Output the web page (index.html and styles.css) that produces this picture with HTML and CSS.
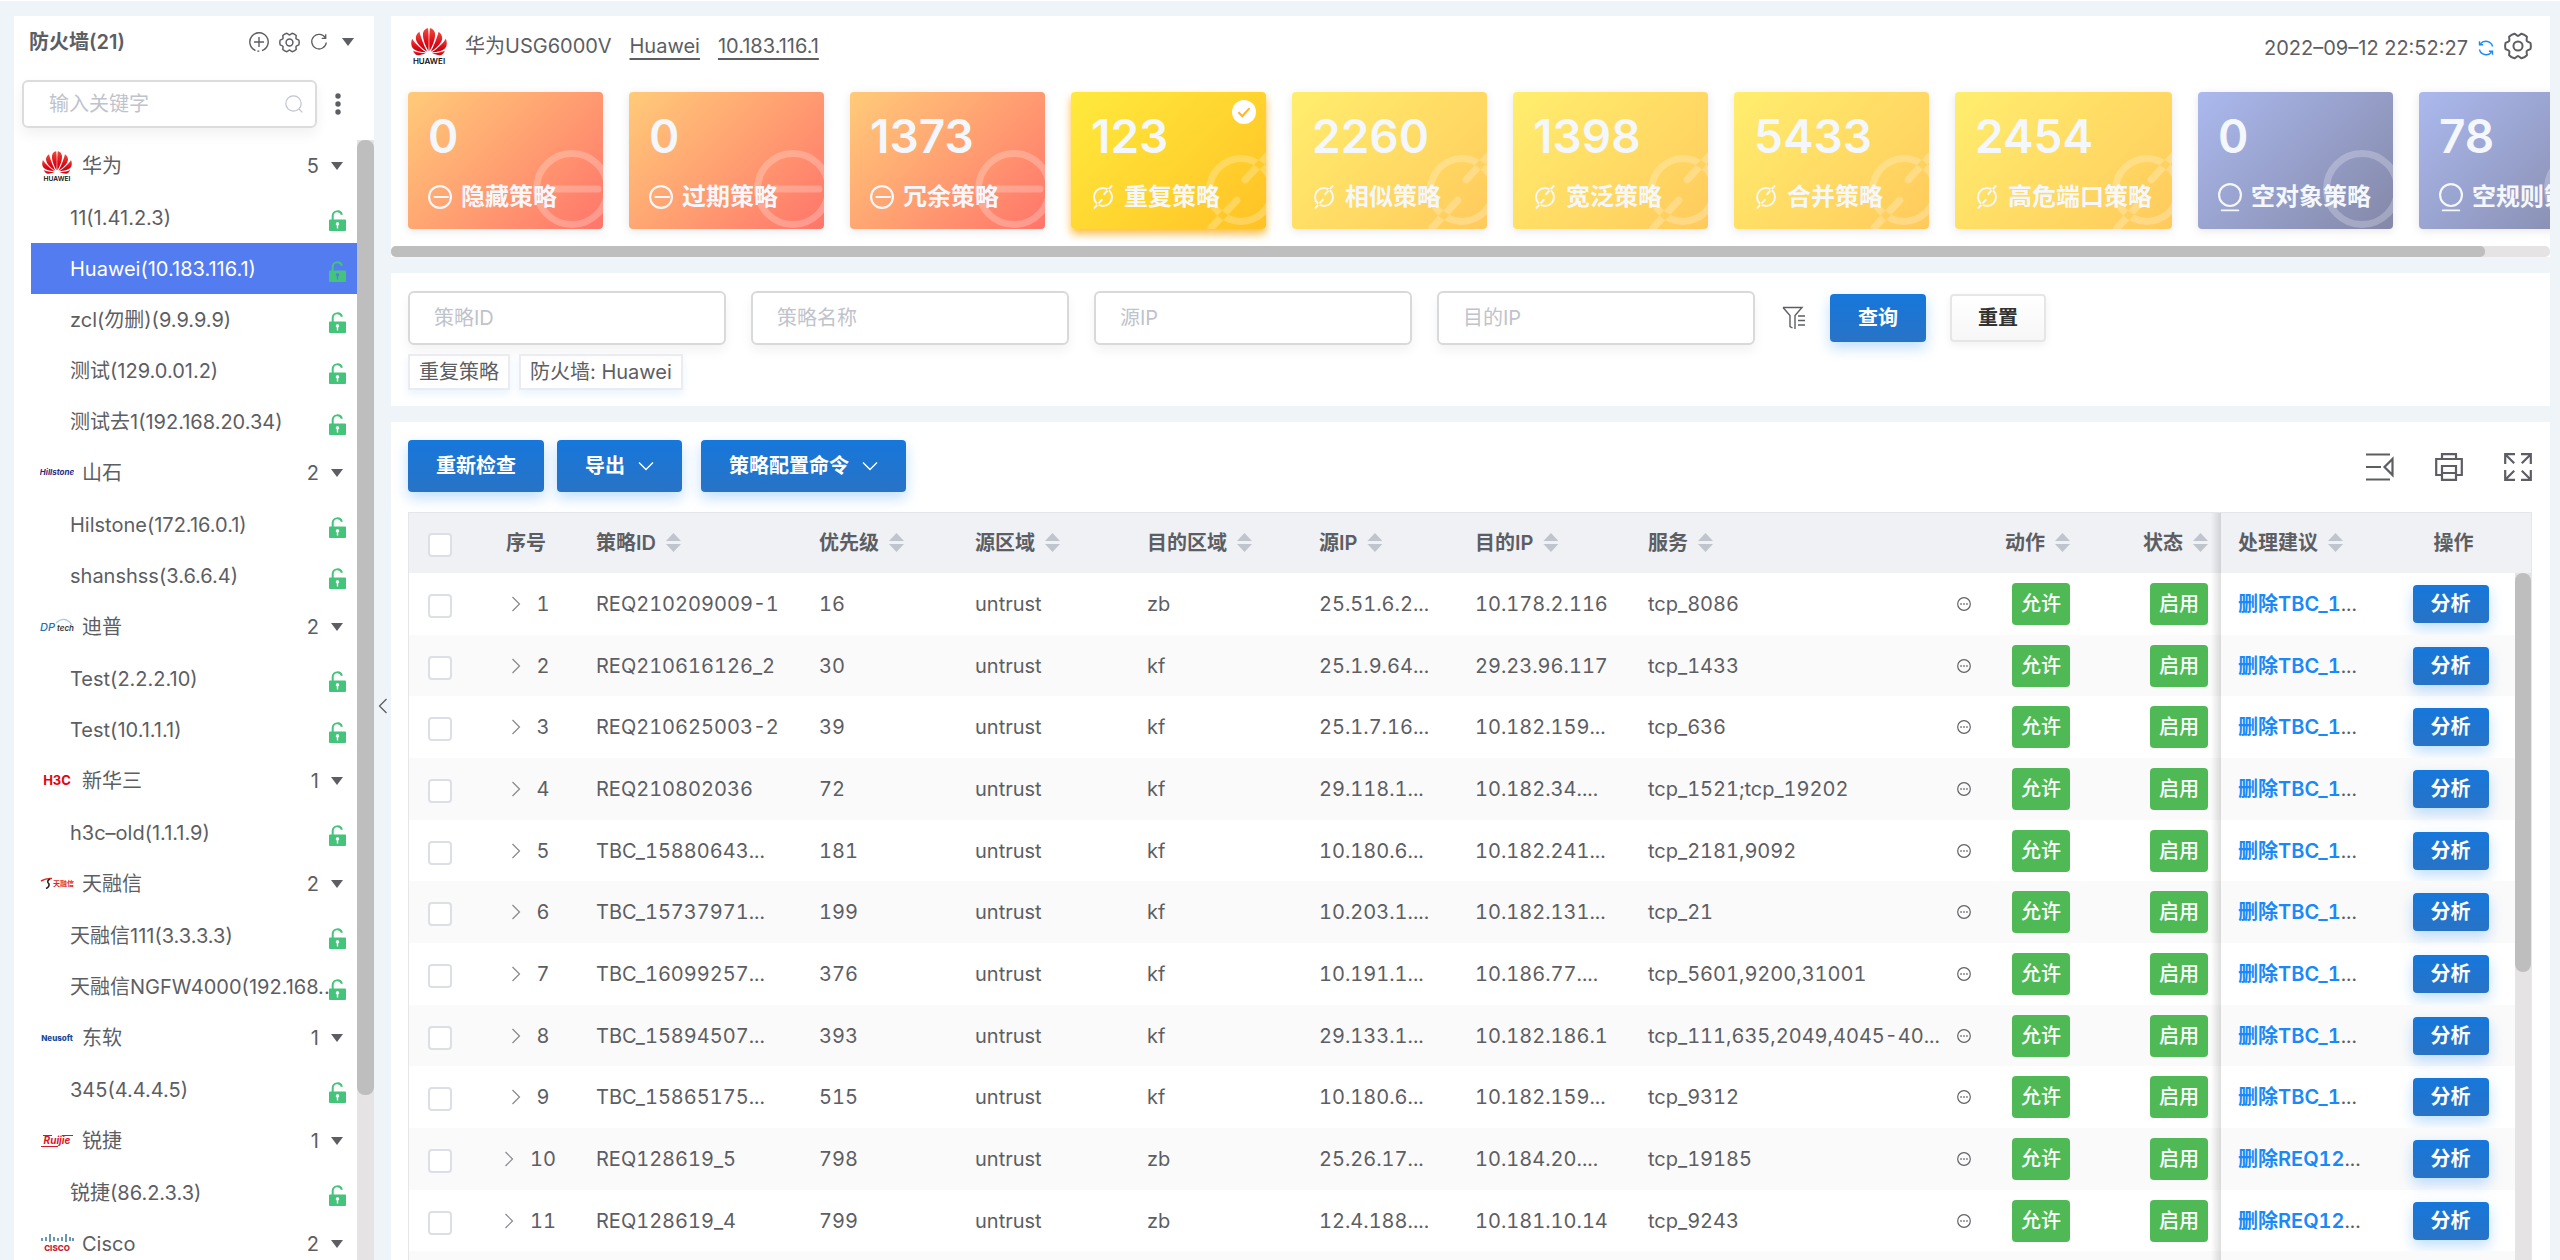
FILE: index.html
```html
<!DOCTYPE html>
<html lang="zh-CN">
<head>
<meta charset="utf-8">
<title>防火墙策略检查</title>
<link rel="stylesheet" href="styles.css">
</head>
<body>
<svg class="sprite" aria-hidden="true">
  <defs>
    <linearGradient id="petal" x1="0" y1="0" x2="0" y2="1"><stop offset="0" stop-color="#ee4a3c"/><stop offset=".6" stop-color="#dd0a17"/><stop offset="1" stop-color="#c8000f"/></linearGradient>
    <symbol id="huawei" viewBox="0 0 36 36">
      <g fill="url(#petal)">
        <path d="M17.4 23.2C14.6 18 11.4 11 12 5.600C12.400 2 15.600.4 17 .3C17.900 4 17.900 18 17.400 23.200Z"/>
        <path d="M18.600 23.200C21.400 18 24.600 11 24 5.600C23.600 2 20.400.4 19 .3C18.100 4 18.100 18 18.600 23.200Z"/>
        <path d="M16.200 23.800C11 20.600 5.400 15.800 4.800 10.600C4.600 7.600 6.400 5 8.400 3.800C9.600 9 13.400 18.600 16.200 23.800Z"/>
        <path d="M19.800 23.800C25 20.600 30.600 15.800 31.200 10.600C31.400 7.600 29.600 5 27.600 3.800C26.400 9 22.600 18.600 19.800 23.800Z"/>
        <path d="M15.200 24.300C9.600 24 2.600 22.600 .8 18.400C-.2 15.800.2 13 1.200 10.800C4.400 16 10.400 21.400 15.200 24.300Z"/>
        <path d="M20.800 24.300C26.400 24 33.400 22.600 35.200 18.400C36.200 15.800 35.800 13 34.800 10.800C31.600 16 25.600 21.400 20.800 24.300Z"/>
        <path d="M14.800 25.300C10.400 27 6.600 28.200 4.400 26.200C3 25 2.400 23.800 2.200 22.800C6 24.400 10.400 25.200 14.800 25.300Z"/>
        <path d="M21.200 25.300C25.600 27 29.400 28.200 31.600 26.200C33 25 33.600 23.800 33.800 22.800C30 24.400 25.600 25.200 21.200 25.300Z"/>
      </g>
      <text x="18" y="35.500" text-anchor="middle" font-size="8" font-weight="600" fill="#111">HUAWEI</text>
    </symbol>
    <symbol id="lock" viewBox="0 0 17 21">
      <path d="M3.700 10V5.800a4.700 4.700 0 0 1 9.200-1.100" fill="none" stroke="#44c37a" stroke-width="2"/>
      <path fill="#44c37a" fill-rule="evenodd" d="M1 9.500h15a1 1 0 0 1 1 1V20a1 1 0 0 1-1 1H1a1 1 0 0 1-1-1v-9.500a1 1 0 0 1 1-1ZM7.800 15.400v3h1.400v-3a1.700 1.700 0 1 0-1.400 0Z"/>
    </symbol>
    <symbol id="gear" viewBox="0 0 24 24">
      <g fill="none" stroke="currentColor" stroke-linejoin="round" stroke-width="1.700">
        <path d="M22.670 14.660L20.160 15.800Q19.300 16.200 19.370 17.160L19.640 19.910Q17.700 21.900 15.030 22.570L12.780 20.970Q12 20.400 11.220 20.970L8.970 22.570Q6.300 21.900 4.360 19.910L4.630 17.160Q4.700 16.200 3.840 15.800L1.330 14.660Q.6 12 1.330 9.340L3.840 8.200Q4.700 7.800 4.630 6.840L4.360 4.090Q6.300 2.100 8.970 1.430L11.220 3.030Q12 3.600 12.780 3.030L15.030 1.430Q17.700 2.100 19.640 4.090L19.370 6.840Q19.300 7.800 20.160 8.200L22.670 9.340Q23.400 12 22.670 14.660Z"/>
        <circle cx="12" cy="12" r="3.900"/>
      </g>
    </symbol>
    <symbol id="minus" viewBox="0 0 78 78">
      <circle cx="39" cy="39" r="35.500" fill="none" stroke="currentColor" stroke-width="7"/>
      <path d="M21 39h44" stroke="currentColor" stroke-width="7" stroke-linecap="round"/>
    </symbol>
    <symbol id="slash" viewBox="-39 -42 78 84">
      <path fill="currentColor" fill-rule="evenodd" d="M0-35A35 35 0 1 1 0 35A35 35 0 1 1 0-35ZM0-28A28 28 0 1 0 0 28A28 28 0 1 0 0-28ZM6.700-7.500L32.700-35.500A3.700 3.700 0 0 0 27.300-40.500L1.300-12.500A3.700 3.700 0 0 0 6.700-7.500ZM-6.700 7.500L-32.700 35.500A3.700 3.700 0 0 0-27.300 40.500L-1.300 12.500A3.700 3.700 0 0 0-6.700 7.500Z"/>
    </symbol>
    <symbol id="ring" viewBox="0 0 78 94">
      <circle cx="39" cy="39" r="35.500" fill="none" stroke="currentColor" stroke-width="7"/>
      <path d="M12 89h54" stroke="currentColor" stroke-width="6" stroke-linecap="round"/>
    </symbol>
    <symbol id="more" viewBox="0 0 14 14">
      <circle cx="7" cy="7" r="6.300" fill="none" stroke="#606266" stroke-width="1.200"/>
      <path d="M3.300 6.300h1.500v1.500H3.300zM6.250 6.300h1.500v1.500h-1.500zM9.200 6.300h1.500v1.500H9.200z" fill="#606266"/>
    </symbol>
    <symbol id="down" viewBox="0 0 16 10"><path d="M1 1.500L8 8.500L15 1.500" fill="none" stroke="#fff" stroke-width="1.400"/></symbol>
    <symbol id="expand" viewBox="0 0 10 16"><path d="M1.500 1L8.500 8L1.500 15" fill="none" stroke="#85878c" stroke-width="1.200"/></symbol>
  </defs>
</svg>

<div class="app">
  <aside class="sidebar">
    <header class="side-head">
      <h2>防火墙(21)</h2>
      <button class="icon-btn" aria-label="添加"><svg width="20" height="20" viewBox="0 0 20 20" fill="none" stroke="currentColor" stroke-width="1.400"><path d="M6.500 18.500A9.200 9.200 0 1 1 13 18.700M10 5v10M5 10h10M8.300 19.100h2"/></svg></button>
      <button class="icon-btn" aria-label="设置"><svg width="21" height="21"><use href="#gear"/></svg></button>
      <button class="icon-btn" aria-label="刷新"><svg width="18" height="18" viewBox="0 0 18 18" fill="none" stroke="currentColor" stroke-width="1.300"><path d="M15.500 5.200A7.300 7.300 0 1 0 16.300 9.500M15.700 1.200v4.200h-4"/></svg></button>
      <button class="icon-btn" aria-label="展开"><span class="caret"></span></button>
    </header>
    <div class="side-search">
      <label class="search-box"><input type="text" placeholder="输入关键字" aria-label="输入关键字"><svg width="18" height="18" viewBox="0 0 18 18" fill="none" stroke="#c0c4cc" stroke-width="1.200"><circle cx="8.500" cy="8.500" r="7.700"/><path d="M14 14l3.300 3.300"/></svg></label>
      <button class="icon-btn" aria-label="更多"><svg width="6" height="22" viewBox="0 0 6 22" fill="currentColor"><circle cx="3" cy="3" r="2.700"/><circle cx="3" cy="11" r="2.700"/><circle cx="3" cy="19" r="2.700"/></svg></button>
    </div>
    <div class="tree-wrap">
      <ul class="tree">
        <li class="group"><svg class="logo" viewBox="0 0 36 36"><use href="#huawei"/></svg><span>华为</span><b>5</b><i class="caret"></i></li>
        <li class="leaf"><span>11(1.41.2.3)</span><svg class="lock"><use href="#lock"/></svg></li>
        <li class="leaf active"><span>Huawei(10.183.116.1)</span><svg class="lock"><use href="#lock"/></svg></li>
        <li class="leaf"><span>zcl(勿删)(9.9.9.9)</span><svg class="lock"><use href="#lock"/></svg></li>
        <li class="leaf"><span>测试(129.0.01.2)</span><svg class="lock"><use href="#lock"/></svg></li>
        <li class="leaf"><span>测试去1(192.168.20.34)</span><svg class="lock"><use href="#lock"/></svg></li>
        <li class="group"><svg class="logo" viewBox="0 0 34 30"><text x="17" y="17" text-anchor="middle" font-size="8" font-weight="700" font-style="italic" fill="#2b2a86">Hillstone</text></svg><span>山石</span><b>2</b><i class="caret"></i></li>
        <li class="leaf"><span>Hilstone(172.16.0.1)</span><svg class="lock"><use href="#lock"/></svg></li>
        <li class="leaf"><span>shanshss(3.6.6.4)</span><svg class="lock"><use href="#lock"/></svg></li>
        <li class="group"><svg class="logo" viewBox="0 0 34 30"><path d="M16 11Q25 3 32 13" fill="none" stroke="#a9cdea" stroke-width="1.300"/><text x="0" y="19" font-size="11" font-style="italic" font-weight="500" fill="#1f6fb5">DP</text><text x="17" y="19" font-size="8" font-style="italic" font-weight="600" fill="#333">tech</text></svg><span>迪普</span><b>2</b><i class="caret"></i></li>
        <li class="leaf"><span>Test(2.2.2.10)</span><svg class="lock"><use href="#lock"/></svg></li>
        <li class="leaf"><span>Test(10.1.1.1)</span><svg class="lock"><use href="#lock"/></svg></li>
        <li class="group"><svg class="logo" viewBox="0 0 34 30"><text x="17" y="19" text-anchor="middle" font-size="13" font-weight="700" fill="#e60012">H3C</text></svg><span>新华三</span><b>1</b><i class="caret"></i></li>
        <li class="leaf"><span>h3c–old(1.1.1.9)</span><svg class="lock"><use href="#lock"/></svg></li>
        <li class="group"><svg class="logo" viewBox="0 0 34 30"><path d="M1 12Q6 9 12 9.500" fill="none" stroke="#e02a20" stroke-width="1.600"/><path d="M10 10Q6 12 9 15Q9.500 18 6 19.500" fill="none" stroke="#222" stroke-width="1.600"/><text x="13" y="17" font-size="7" font-weight="700" fill="#e02a20">天融信</text></svg><span>天融信</span><b>2</b><i class="caret"></i></li>
        <li class="leaf"><span>天融信111(3.3.3.3)</span><svg class="lock"><use href="#lock"/></svg></li>
        <li class="leaf"><span>天融信NGFW4000(192.168...</span><svg class="lock"><use href="#lock"/></svg></li>
        <li class="group"><svg class="logo" viewBox="0 0 34 30"><text x="17" y="18" text-anchor="middle" font-size="8" font-weight="800" fill="#174a9c">Neusoft</text></svg><span>东软</span><b>1</b><i class="caret"></i></li>
        <li class="leaf"><span>345(4.4.4.5)</span><svg class="lock"><use href="#lock"/></svg></li>
        <li class="group"><svg class="logo" viewBox="0 0 34 30"><path d="M3 9.500h9M22 9.500h11M1 20.500h17" stroke="#d7152b" stroke-width="1"/><text x="17" y="18" text-anchor="middle" font-size="10" font-style="italic" font-weight="700" fill="#d7152b">Ruijie</text></svg><span>锐捷</span><b>1</b><i class="caret"></i></li>
        <li class="leaf"><span>锐捷(86.2.3.3)</span><svg class="lock"><use href="#lock"/></svg></li>
        <li class="group"><svg class="logo" viewBox="0 0 34 30"><path d="M2 9v3M6 8v4M10 5v8M14 8v4M18 9v3M22 8v4M26 5v8M30 8v4M33 9v3" stroke="#1c6183" stroke-width="1.300"/><text x="17" y="22" text-anchor="middle" font-size="8" font-weight="800" fill="#c8202f">CISCO</text></svg><span>Cisco</span><b>2</b><i class="caret"></i></li>
      </ul>
      <div class="vbar"><div class="thumb"></div></div>
    </div>
  </aside>

  <button class="collapse" aria-label="收起"><svg width="10" height="16" viewBox="0 0 10 16" fill="none" stroke="currentColor" stroke-width="1.300"><path d="M8.500 1L1.500 8l7 7"/></svg></button>

  <main class="main">
    <section class="panel overview">
      <header class="device">
        <svg width="36" height="36"><use href="#huawei"/></svg>
        <span>华为USG6000V</span>
        <a href="#">Huawei</a>
        <a href="#">10.183.116.1</a>
        <time>2022–09–12 22:52:27</time>
        <button class="icon-btn blue" aria-label="刷新"><svg width="16" height="16" viewBox="0 0 16 16" fill="none" stroke="currentColor" stroke-width="1.400"><path d="M14.600 6.500A7 7 0 0 0 2.500 3.800M1.400 9.500A7 7 0 0 0 13.500 12.200M1.500 1.200v3.600h3.600M14.500 14.800v-3.600h-3.600"/></svg></button>
        <button class="icon-btn" aria-label="设置"><svg width="28" height="28"><use href="#gear"/></svg></button>
      </header>
      <div class="cards">
        <article class="card orange"><strong>0</strong><p><svg><use href="#minus"/></svg>隐藏策略</p><svg class="mark"><use href="#minus"/></svg></article>
        <article class="card orange"><strong>0</strong><p><svg><use href="#minus"/></svg>过期策略</p><svg class="mark"><use href="#minus"/></svg></article>
        <article class="card orange"><strong>1373</strong><p><svg><use href="#minus"/></svg>冗余策略</p><svg class="mark"><use href="#minus"/></svg></article>
        <article class="card yellow selected"><strong>123</strong><p><svg><use href="#slash"/></svg>重复策略</p><svg class="mark"><use href="#slash"/></svg><svg class="badge" viewBox="0 0 24 24"><circle cx="12" cy="12" r="12" fill="#fff"/><path d="M6.500 12.300l3.800 3.900 7.200-8" fill="none" stroke="#ffb42b" stroke-width="2"/></svg></article>
        <article class="card yellow"><strong>2260</strong><p><svg><use href="#slash"/></svg>相似策略</p><svg class="mark"><use href="#slash"/></svg></article>
        <article class="card yellow"><strong>1398</strong><p><svg><use href="#slash"/></svg>宽泛策略</p><svg class="mark"><use href="#slash"/></svg></article>
        <article class="card yellow"><strong>5433</strong><p><svg><use href="#slash"/></svg>合并策略</p><svg class="mark"><use href="#slash"/></svg></article>
        <article class="card yellow"><strong>2454</strong><p><svg><use href="#slash"/></svg>高危端口策略</p><svg class="mark"><use href="#slash"/></svg></article>
        <article class="card purple"><strong>0</strong><p><svg><use href="#ring"/></svg>空对象策略</p><svg class="mark"><use href="#ring"/></svg></article>
        <article class="card purple"><strong>78</strong><p><svg><use href="#ring"/></svg>空规则策略</p><svg class="mark"><use href="#ring"/></svg></article>
      </div>
      <div class="hbar"><div class="thumb"></div></div>
    </section>

    <section class="panel filter">
      <form class="fields">
        <input type="text" placeholder="策略ID" aria-label="策略ID">
        <input type="text" placeholder="策略名称" aria-label="策略名称">
        <input type="text" placeholder="源IP" aria-label="源IP">
        <input type="text" placeholder="目的IP" aria-label="目的IP">
        <button type="button" class="icon-btn" aria-label="高级筛选"><svg width="24" height="24" viewBox="0 0 24 24" fill="none" stroke="currentColor" stroke-width="1.400"><path d="M1 1.500h19l-7 8V23M1 1.500l7 8v11l2.500 1.500M16 10h7M16 14.500h7M16 19h7"/></svg></button>
        <button type="button" class="btn primary query">查询</button>
        <button type="button" class="btn plain">重置</button>
      </form>
      <div class="chips"><span>重复策略</span><span>防火墙: Huawei</span></div>
    </section>

    <section class="panel list">
      <div class="toolbar">
        <button class="btn primary">重新检查</button>
        <button class="btn primary">导出<svg width="16" height="10"><use href="#down"/></svg></button>
        <button class="btn primary">策略配置命令<svg width="16" height="10"><use href="#down"/></svg></button>
        <div class="tools">
          <button class="icon-btn" aria-label="列设置"><svg width="28" height="28" viewBox="0 0 28 28" fill="none" stroke="currentColor" stroke-width="2.200"><path d="M0 1.500h24M0 14h15M0 26.500h24M26.500 6v16l-8-8z"/></svg></button>
          <button class="icon-btn" aria-label="打印"><svg width="28" height="28" viewBox="0 0 28 28" fill="none" stroke="currentColor" stroke-width="2.200"><path d="M7 6V1.200h14V6M7 22H1.200V6h25.600v16H21M7 13h14v13.800H7zM7 20h14"/></svg></button>
          <button class="icon-btn" aria-label="全屏"><svg width="28" height="28" viewBox="0 0 28 28" fill="none" stroke="currentColor" stroke-width="2.200"><path d="M1.200 11V1.200H11M1.200 1.200l9 9M17 1.200h9.800V11M26.800 1.200l-9 9M1.200 17v9.800H11M1.200 26.800l9-9M26.800 17v9.800H17M26.800 26.800l-9-9"/></svg></button>
        </div>
      </div>
      <div class="table-wrap">
        <table>
          <colgroup><col class="c-check"><col class="c-no"><col class="c-id"><col class="c-prio"><col class="c-zone"><col class="c-zone"><col class="c-src"><col class="c-dst"><col><col class="c-act"><col class="c-stat"><col class="c-adv"><col class="c-op"></colgroup>
          <thead><tr><th><input type="checkbox" aria-label="全选"></th><th class="no">序号</th><th>策略ID<i class="sort"></i></th><th>优先级<i class="sort"></i></th><th>源区域<i class="sort"></i></th><th>目的区域<i class="sort"></i></th><th>源IP<i class="sort"></i></th><th>目的IP<i class="sort"></i></th><th>服务<i class="sort"></i></th><th>动作<i class="sort"></i></th><th>状态<i class="sort"></i></th><th class="fix">处理建议<i class="sort"></i></th><th class="op">操作</th></tr></thead>
          <tbody>
            <tr><td><input type="checkbox" aria-label="选择 1"></td><td class="no"><svg><use href="#expand"/></svg>1</td><td>REQ210209009-1</td><td>16</td><td>untrust</td><td>zb</td><td>25.51.6.2...</td><td>10.178.2.116</td><td><div class="svc">tcp_8086<svg><use href="#more"/></svg></div></td><td><span class="tag">允许</span></td><td><span class="tag">启用</span></td><td class="fix"><a href="#">删除TBC_1</a>...</td><td class="op"><button class="btn primary small">分析</button></td></tr>
            <tr><td><input type="checkbox" aria-label="选择 2"></td><td class="no"><svg><use href="#expand"/></svg>2</td><td>REQ210616126_2</td><td>30</td><td>untrust</td><td>kf</td><td>25.1.9.64...</td><td>29.23.96.117</td><td><div class="svc">tcp_1433<svg><use href="#more"/></svg></div></td><td><span class="tag">允许</span></td><td><span class="tag">启用</span></td><td class="fix"><a href="#">删除TBC_1</a>...</td><td class="op"><button class="btn primary small">分析</button></td></tr>
            <tr><td><input type="checkbox" aria-label="选择 3"></td><td class="no"><svg><use href="#expand"/></svg>3</td><td>REQ210625003-2</td><td>39</td><td>untrust</td><td>kf</td><td>25.1.7.16...</td><td>10.182.159...</td><td><div class="svc">tcp_636<svg><use href="#more"/></svg></div></td><td><span class="tag">允许</span></td><td><span class="tag">启用</span></td><td class="fix"><a href="#">删除TBC_1</a>...</td><td class="op"><button class="btn primary small">分析</button></td></tr>
            <tr><td><input type="checkbox" aria-label="选择 4"></td><td class="no"><svg><use href="#expand"/></svg>4</td><td>REQ210802036</td><td>72</td><td>untrust</td><td>kf</td><td>29.118.1...</td><td>10.182.34....</td><td><div class="svc">tcp_1521;tcp_19202<svg><use href="#more"/></svg></div></td><td><span class="tag">允许</span></td><td><span class="tag">启用</span></td><td class="fix"><a href="#">删除TBC_1</a>...</td><td class="op"><button class="btn primary small">分析</button></td></tr>
            <tr><td><input type="checkbox" aria-label="选择 5"></td><td class="no"><svg><use href="#expand"/></svg>5</td><td>TBC_15880643...</td><td>181</td><td>untrust</td><td>kf</td><td>10.180.6...</td><td>10.182.241...</td><td><div class="svc">tcp_2181,9092<svg><use href="#more"/></svg></div></td><td><span class="tag">允许</span></td><td><span class="tag">启用</span></td><td class="fix"><a href="#">删除TBC_1</a>...</td><td class="op"><button class="btn primary small">分析</button></td></tr>
            <tr><td><input type="checkbox" aria-label="选择 6"></td><td class="no"><svg><use href="#expand"/></svg>6</td><td>TBC_15737971...</td><td>199</td><td>untrust</td><td>kf</td><td>10.203.1....</td><td>10.182.131...</td><td><div class="svc">tcp_21<svg><use href="#more"/></svg></div></td><td><span class="tag">允许</span></td><td><span class="tag">启用</span></td><td class="fix"><a href="#">删除TBC_1</a>...</td><td class="op"><button class="btn primary small">分析</button></td></tr>
            <tr><td><input type="checkbox" aria-label="选择 7"></td><td class="no"><svg><use href="#expand"/></svg>7</td><td>TBC_16099257...</td><td>376</td><td>untrust</td><td>kf</td><td>10.191.1...</td><td>10.186.77....</td><td><div class="svc">tcp_5601,9200,31001<svg><use href="#more"/></svg></div></td><td><span class="tag">允许</span></td><td><span class="tag">启用</span></td><td class="fix"><a href="#">删除TBC_1</a>...</td><td class="op"><button class="btn primary small">分析</button></td></tr>
            <tr><td><input type="checkbox" aria-label="选择 8"></td><td class="no"><svg><use href="#expand"/></svg>8</td><td>TBC_15894507...</td><td>393</td><td>untrust</td><td>kf</td><td>29.133.1...</td><td>10.182.186.1</td><td><div class="svc">tcp_111,635,2049,4045-40...<svg><use href="#more"/></svg></div></td><td><span class="tag">允许</span></td><td><span class="tag">启用</span></td><td class="fix"><a href="#">删除TBC_1</a>...</td><td class="op"><button class="btn primary small">分析</button></td></tr>
            <tr><td><input type="checkbox" aria-label="选择 9"></td><td class="no"><svg><use href="#expand"/></svg>9</td><td>TBC_15865175...</td><td>515</td><td>untrust</td><td>kf</td><td>10.180.6...</td><td>10.182.159...</td><td><div class="svc">tcp_9312<svg><use href="#more"/></svg></div></td><td><span class="tag">允许</span></td><td><span class="tag">启用</span></td><td class="fix"><a href="#">删除TBC_1</a>...</td><td class="op"><button class="btn primary small">分析</button></td></tr>
            <tr><td><input type="checkbox" aria-label="选择 10"></td><td class="no"><svg><use href="#expand"/></svg>10</td><td>REQ128619_5</td><td>798</td><td>untrust</td><td>zb</td><td>25.26.17...</td><td>10.184.20....</td><td><div class="svc">tcp_19185<svg><use href="#more"/></svg></div></td><td><span class="tag">允许</span></td><td><span class="tag">启用</span></td><td class="fix"><a href="#">删除REQ12</a>...</td><td class="op"><button class="btn primary small">分析</button></td></tr>
            <tr><td><input type="checkbox" aria-label="选择 11"></td><td class="no"><svg><use href="#expand"/></svg>11</td><td>REQ128619_4</td><td>799</td><td>untrust</td><td>zb</td><td>12.4.188....</td><td>10.181.10.14</td><td><div class="svc">tcp_9243<svg><use href="#more"/></svg></div></td><td><span class="tag">允许</span></td><td><span class="tag">启用</span></td><td class="fix"><a href="#">删除REQ12</a>...</td><td class="op"><button class="btn primary small">分析</button></td></tr>
            <tr><td></td><td></td><td></td><td></td><td></td><td></td><td></td><td></td><td></td><td></td><td></td><td class="fix"></td><td></td></tr>
          </tbody>
        </table>
        <div class="table-bar"><div class="cap"></div><div class="vbar"><div class="thumb"></div></div></div>
      </div>
    </section>
  </main>
</div>
</body>
</html>
```
FILE: styles.css
```css
* { box-sizing: border-box; }
body {
  margin: 0;
  height: 100vh;
  overflow: hidden;
  background: #eff4f8;
  color: #5c5e63;
  font: 20px/28px Inter, "Noto Sans CJK SC", sans-serif;
}
button, input { font: inherit; color: inherit; }
h2, p, ul { margin: 0; padding: 0; }
svg { display: block; flex: none; }
a { color: inherit; }
.sprite { position: absolute; width: 0; height: 0; }

.app {
  display: flex;
  height: 100vh;
  padding: 15px 10px 0 14px;
  border-top: 1px solid #fff;
}
.icon-btn {
  display: flex;
  flex: none;
  padding: 0;
  border: 0;
  background: none;
}
.caret {
  flex: none;
  width: 12px;
  height: 8px;
  background: currentColor;
  clip-path: polygon(0 0, 100% 0, 50% 100%);
}

/* sidebar */
.sidebar {
  display: flex;
  flex: none;
  flex-direction: column;
  width: 360px;
  background: #fff;
}
.side-head {
  display: flex;
  align-items: center;
  gap: 10px;
  height: 52px;
  padding: 0 20px 0 15px;
}
.side-head h2 { flex: 1; font-size: 20px; font-weight: 600; }
.side-head .icon-btn:last-child { margin-left: 4px; }
.side-search {
  display: flex;
  align-items: center;
  gap: 18px;
  padding: 12px 0 12px 8px;
}
.search-box {
  display: flex;
  align-items: center;
  width: 295px;
  height: 48px;
  padding: 0 12px 0 25px;
  border: 2px solid #dcdcdf;
  border-radius: 6px;
  box-shadow: 0 6px 14px rgba(0, 0, 0, .06);
}
.search-box input { flex: 1; min-width: 0; padding: 0; border: 0; outline: 0; }
::placeholder { color: #bfc3cc; opacity: 1; }
.tree-wrap { display: flex; flex: 1; min-height: 0; overflow: hidden; }
.tree { flex: 1; min-width: 0; padding-left: 17px; list-style: none; }
.group, .leaf { display: flex; align-items: center; white-space: nowrap; }
.group { height: 52px; padding: 0 14px 0 9px; }
.group .logo { width: 34px; height: 30px; }
.group span { flex: 1; padding-left: 8px; }
.group b { padding-right: 12px; font-weight: 400; }
.leaf { height: 51px; padding-left: 39px; }
.leaf span { flex: 1; min-width: 0; }
.leaf .lock { width: 17px; height: 21px; margin: 6px 11px 0 0; }
.leaf.active { background: #547cf1; color: #fff; }
.vbar { flex: none; width: 17px; background: #e5e3e3; }
.vbar .thumb { height: 955px; border-radius: 8px; background: #bebebe; }
.collapse {
  flex: none;
  width: 17px;
  padding: 0 0 0 4px;
  border: 0;
  background: none;
}
.collapse svg { margin-top: 136px; }

/* main column */
.main { display: flex; flex: 1; flex-direction: column; gap: 16px; min-width: 0; }
.panel { flex: none; background: #fff; }
.device {
  display: flex;
  align-items: center;
  gap: 18px;
  height: 60px;
  padding: 0 18px 0 20px;
}
.device time { flex: 1; padding-top: 4px; text-align: right; }
.device a { text-underline-offset: 5px; }
.device .icon-btn { margin-left: -8px; }
.device .blue { margin-top: 4px; color: #1989fa; }
.cards {
  display: flex;
  gap: 26px;
  height: 170px;
  padding: 16px 0 17px 17px;
  overflow: hidden;
}
.card {
  position: relative;
  flex: none;
  min-width: 195px;
  height: 137px;
  padding: 16px 20px;
  overflow: hidden;
  border-radius: 4px;
  color: #f4f7fb;
  box-shadow: 0 2px 10px rgba(0, 0, 0, .1);
}
.card strong { display: block; font-size: 46px; font-weight: 600; line-height: 56px; }
.card p {
  display: flex;
  align-items: center;
  gap: 9px;
  margin-top: 17px;
  font-size: 24px;
  font-weight: 700;
  line-height: 32px;
  white-space: nowrap;
}
.card p svg { width: 24px; height: 24px; }
.card .mark { position: absolute; right: -8px; bottom: 1px; width: 78px; height: 78px; color: rgba(255, 255, 255, .24); }
.orange { background: linear-gradient(135deg, #ffcb79, #ff756a); }
.yellow { background: linear-gradient(135deg, #ffee6e, #ffca5c); }
.yellow .mark { right: -14px; bottom: -3px; width: 78px; height: 84px; }
.purple { background: linear-gradient(135deg, #abb9ee, #8488a8); }
.purple p svg { height: 29px; }
.purple .mark { bottom: -15px; height: 94px; }
.selected { background: linear-gradient(135deg, #ffea3c, #ffc225); box-shadow: 0 5px 8px #ffbc45; }
.card .badge { position: absolute; top: 8px; right: 10px; width: 24px; height: 24px; }
.hbar { height: 11px; border-radius: 5px; background: #e5e3e3; }
.hbar .thumb { width: 97%; height: 11px; border-radius: 5px; background: #bebebe; }

/* buttons */
.btn {
  display: flex;
  align-items: center;
  justify-content: center;
  gap: 13px;
  height: 52px;
  padding: 0 28px;
  border: 0;
  border-radius: 4px;
  font-weight: 700;
  white-space: nowrap;
}
.primary {
  background: linear-gradient(#1677db, #2873c6);
  color: #fff;
  box-shadow: 0 6px 14px rgba(25, 137, 250, .28);
}
.plain {
  width: 96px;
  height: 48px;
  padding: 0;
  border: 2px solid #e6e6e6;
  background: linear-gradient(#fff, #f7f7f7);
  color: #333;
  box-shadow: 0 3px 8px rgba(0, 0, 0, .06);
}
.query { width: 96px; height: 48px; margin-right: 24px; padding: 0; }
.small { width: 76px; height: 38px; margin: 0 auto; padding: 0; }

/* filter */
.filter { height: 133px; padding: 18px 17px 0; }
.fields { display: flex; align-items: center; }
.fields input {
  width: 318px;
  height: 54px;
  margin-right: 25px;
  padding: 0 24px;
  border: 2px solid #d8d9db;
  border-radius: 6px;
  background: #fff;
  box-shadow: 0 6px 12px rgba(0, 0, 0, .05);
}
.fields .icon-btn { margin: 0 24px 0 2px; }
.chips { display: flex; gap: 9px; margin-top: 9px; }
.chips span {
  padding: 1px 9px;
  border: 2px solid #ececf0;
  box-shadow: 0 4px 8px rgba(25, 137, 250, .1);
  line-height: 30px;
}

/* policy list */
.panel.list {
  display: flex;
  flex: 1;
  flex-direction: column;
  min-height: 0;
  padding: 18px 18px 0 17px;
}
.toolbar { display: flex; flex: none; gap: 19px; height: 72px; }
.toolbar .btn:first-child { margin-right: -6px; }
.tools { display: flex; gap: 41px; height: 54px; margin-left: auto; align-items: center; }
.table-wrap {
  display: flex;
  flex: 1;
  min-height: 0;
  overflow: hidden;
  border: 1px solid #e4e6ea;
  border-bottom: 0;
}
table {
  flex: 1;
  width: 100%;
  min-width: 0;
  height: max-content;
  border-collapse: collapse;
  table-layout: fixed;
  font-variant-numeric: tabular-nums;
}
.c-check { width: 63px; }
.c-no { width: 108px; }
.c-id { width: 223px; }
.c-prio { width: 156px; }
.c-zone { width: 172px; }
.c-src { width: 156px; }
.c-dst { width: 173px; }
.c-act { width: 138px; }
.c-stat { width: 94px; }
.c-adv { width: 165px; }
.c-op { width: 129px; }
th, td {
  height: 62px;
  padding: 0 0 0 16px;
  text-align: left;
  white-space: nowrap;
}
th { height: 60px; background: #eff1f5; font-weight: 600; }
tbody tr:nth-child(even) { background: #fafafa; }
tbody tr:nth-child(3n+2) td { height: 61px; }
td:first-child, th:first-child { padding-left: 19px; }
input[type="checkbox"] {
  display: block;
  appearance: none;
  width: 24px;
  height: 24px;
  margin: 4px 0 0;
  border: 2px solid #dcdfe6;
  border-radius: 4px;
  background: #fff;
}
th.no { padding: 0; text-align: center; }
td.no { padding: 0 0 0 8px; text-align: center; }
.no svg {
  display: inline-block;
  width: 10px;
  height: 16px;
  margin-right: 16px;
  vertical-align: -1px;
}
.sort {
  display: inline-block;
  width: 15px;
  height: 19px;
  margin-left: 10px;
  background: #c0c4cc;
  clip-path: polygon(50% 0, 100% 42%, 0 42%, 0 58%, 100% 58%, 50% 100%, 0 58%, 0 42%);
  vertical-align: -2px;
}
.svc { display: flex; align-items: center; justify-content: space-between; padding-right: 18px; }
.svc svg { width: 14px; height: 14px; }
.tag {
  display: inline-block;
  margin-left: 7px;
  padding: 0 9px;
  border-radius: 4px;
  background: #4fba55;
  color: #fff;
  font-weight: 500;
  line-height: 42px;
}
.fix { position: relative; padding-left: 17px; }
.fix::before {
  content: "";
  position: absolute;
  top: 0;
  bottom: 0;
  left: -10px;
  width: 10px;
  background: linear-gradient(to left, rgba(0, 0, 0, .13), transparent);
}
.fix a { color: #1989fa; font-weight: 600; text-decoration: none; }
.op { padding: 0; text-align: center; }
th.op { padding-left: 6px; }
.table-bar { display: flex; flex: none; flex-direction: column; width: 16px; }
.table-bar .cap { height: 60px; background: #eff1f5; }
.table-bar .vbar { flex: 1; width: 16px; }
.table-bar .thumb { height: 399px; }
```
